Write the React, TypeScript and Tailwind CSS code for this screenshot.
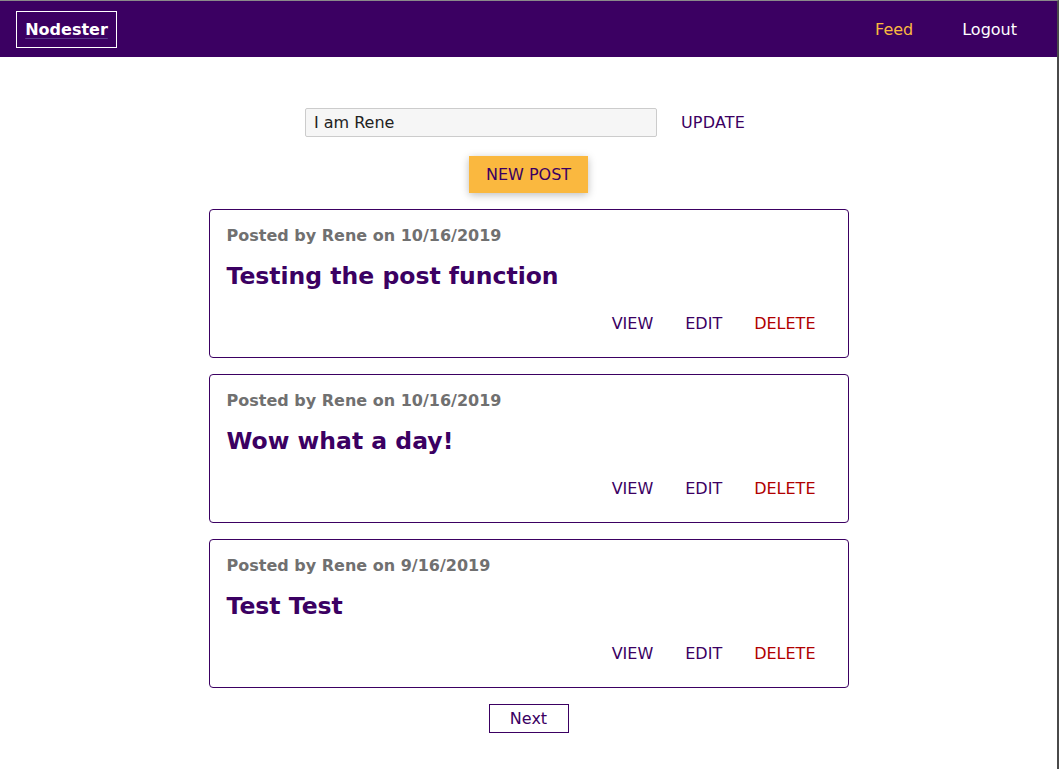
import React from "react";

const posts = [
  { meta: "Posted by Rene on 10/16/2019", title: "Testing the post function" },
  { meta: "Posted by Rene on 10/16/2019", title: "Wow what a day!" },
  { meta: "Posted by Rene on 9/16/2019", title: "Test Test" },
];

export default function App() {
  return (
    <div
      className="min-h-[769px] bg-white border-t border-t-[#8a8a8a] border-r-2 border-r-[#4a4a4a] text-[16px]"
      style={{ fontFamily: '"DejaVu Sans", "Liberation Sans", sans-serif' }}
    >
      <header className="h-14 bg-[#3b0062] flex items-center pl-4 pr-10">
        <div className="h-[37px] w-[101px] border border-white flex items-center justify-center text-white font-bold leading-[20px] pt-[1px]">
          <span className="underline decoration-[#5b3a8c] underline-offset-[3px]">Nodester</span>
        </div>
        <div className="flex-1" />
        <nav className="flex items-center gap-[49px] leading-[19px]">
          <span className="text-[#fab83f]">Feed</span>
          <span className="text-white">Logout</span>
        </nav>
      </header>

      <main className="flex flex-col items-center pt-[51px]">
        <div className="flex items-center pl-[9px]">
          <div className="w-[352px] h-[29px] bg-[#f6f6f6] border border-[#cccccc] rounded-[2px] pl-2 flex items-center text-[#222] leading-[19px]">
            I am Rene
          </div>
          <button className="ml-2 px-4 py-1 text-[#3b0062] leading-[19px] tracking-[0.2px]">UPDATE</button>
        </div>

        <button className="mt-[19px] bg-[#fab83f] border border-[#fab83f] px-4 py-2 text-[#3b0062] leading-[19px] shadow-[0_2px_8px_rgba(0,0,0,0.26)]">
          NEW POST
        </button>

        <div className="mt-4 w-[640px] flex flex-col gap-4">
          {posts.map((p, i) => (
            <article key={i} className="border border-[#3b0062] rounded-[4px] p-4 pl-[17px]">
              <h3 className="text-[#707070] font-bold leading-[20px] m-0">{p.meta}</h3>
              <h1 className="my-4 text-[23.5px] leading-[28px] font-bold text-[#3b0062]">{p.title}</h1>
              <div className="flex justify-end leading-[19px]">
                <button className="px-4 py-2 text-[#3b0062]">VIEW</button>
                <button className="px-4 py-2 text-[#3b0062]">EDIT</button>
                <button className="px-4 py-2 text-[#b00000]">DELETE</button>
              </div>
            </article>
          ))}
        </div>

        <button className="mt-4 w-20 h-[29px] border border-[#3b0062] text-[#3b0062] leading-[19px]">
          Next
        </button>
      </main>
    </div>
  );
}
